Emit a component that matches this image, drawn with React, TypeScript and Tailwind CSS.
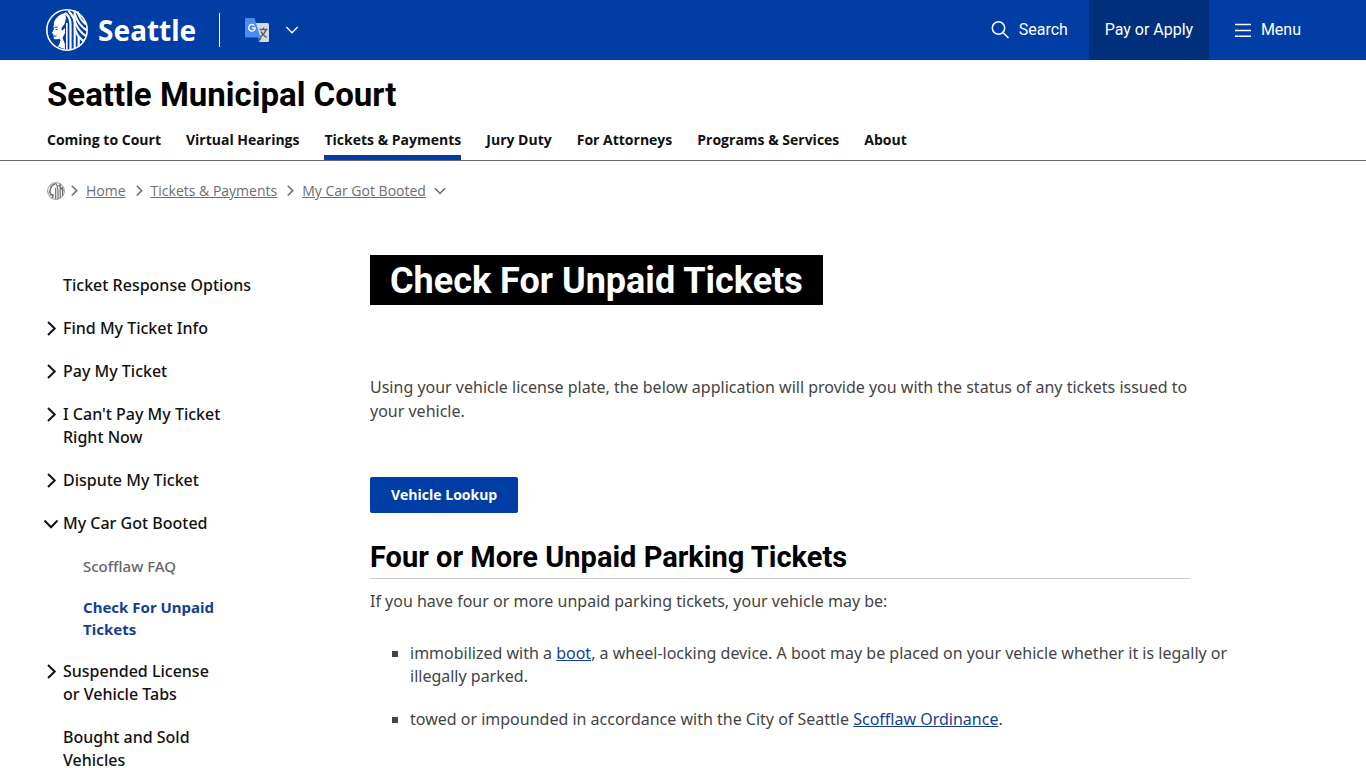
import clsx from "clsx";
import { ReactNode } from "react";

const navItems = [
  { label: "Coming to Court" },
  { label: "Virtual Hearings" },
  { label: "Tickets & Payments", active: true },
  { label: "Jury Duty" },
  { label: "For Attorneys" },
  { label: "Programs & Services" },
  { label: "About" },
];

const crumbs = ["Home", "Tickets & Payments", "My Car Got Booted"];

type SideItem = {
  label: string;
  state?: "closed" | "open";
  children?: { label: string; active?: boolean }[];
};

const sideItems: SideItem[] = [
  { label: "Ticket Response Options" },
  { label: "Find My Ticket Info", state: "closed" },
  { label: "Pay My Ticket", state: "closed" },
  { label: "I Can't Pay My Ticket Right Now", state: "closed" },
  { label: "Dispute My Ticket", state: "closed" },
  {
    label: "My Car Got Booted",
    state: "open",
    children: [
      { label: "Scofflaw FAQ" },
      { label: "Check For Unpaid Tickets", active: true },
    ],
  },
  { label: "Suspended License or Vehicle Tabs", state: "closed" },
  { label: "Bought and Sold Vehicles" },
];

const Chevron = ({
  down,
  className,
  strokeWidth = 2,
}: {
  down?: boolean;
  className?: string;
  strokeWidth?: number;
}) => (
  <svg
    viewBox="0 0 16 16"
    className={clsx("shrink-0", className)}
    fill="none"
    stroke="currentColor"
    strokeWidth={strokeWidth}
    aria-hidden="true"
  >
    <path d={down ? "M1.5 4.5 8 11.2l6.5-6.7" : "M5 1 11.7 7.500 5 14"} />
  </svg>
);

const SealLogo = ({ className }: { className?: string }) => (
  <svg viewBox="0 0 42 42" className={className} aria-hidden="true">
    <circle cx="21" cy="21" r="20.2" fill="none" stroke="currentColor" strokeWidth="1.6" />
    {/* face in profile */}
    <path
      d="M19 4C13 5.500 9.500 9 8 13.500L7.500 18 8 20 5.800 24 7.500 25 7.200 26.500 8 27.300 7.600 29C8 30.600 10 30.500 13.500 29.700L14.500 31C14 34 13 36 12 37.600 14 38.800 17 39.800 19 40L18.800 34.500 16.500 29 19 24V19L15.800 22 15.500 19 18.500 15 20 9Z"
      fill="currentColor"
    />
    <path d="M8.500 18.300 11.500 18M9.500 20.400 11.500 20.600M8 27H10.500" stroke="#003da5" strokeWidth="1" />
    {/* hair */}
    <g fill="none" stroke="currentColor" strokeWidth="2.2">
      <path d="M19 4C21 5 24.500 9 24.500 15V40.500" />
      <path d="M22.500 1.500C24 5 28.700 7 28.700 14V40" />
      <path d="M20.800 14V40.500" strokeWidth="1.6" />
      <path d="M28.700 1.500V12" />
      <path d="M31.500 2.500C33 8 36 12 40 15.500" />
      <path d="M28.700 5C31 12 35 18 41 21.500" />
      <path d="M28.700 12C31 19 35 24 40 27" />
      <path d="M28.700 19C30 25 34 29.500 37.500 32" />
      <path d="M32.700 28V38" />
    </g>
  </svg>
);

/* small seal for the breadcrumb, with fewer and heavier strands */
const SealMark = ({ className }: { className?: string }) => (
  <svg viewBox="0 0 18 18" className={className} fill="none" stroke="currentColor" aria-hidden="true">
    <circle cx="9" cy="9" r="8.400" strokeWidth="1" strokeOpacity="0.7" />
    <path d="M8 2C5 3 3.500 5 3.500 7.500L2.500 10.300 3.500 11V12.800H6C6.200 14.500 5.500 15.500 5 16.200" strokeWidth="1.500" />
    <path d="M8.500 1C10 3 11 5 11 8V17M8.700 6V17M13.200 1.500V16M15.500 5V14M11.500 3 16.500 9" strokeWidth="1.200" />
  </svg>
);

const TranslateIcon = () => (
  <svg viewBox="0 0 24 24" className="h-6 w-6" aria-hidden="true">
    <path d="M10 5H22.500A1.500 1.500 0 0 1 24 6.500V22.500A1.500 1.500 0 0 1 22.500 24H14Z" fill="#d7d9dc" />
    <path d="M12.500 19.500H17L14 24Z" fill="#3a5ba8" />
    <path
      d="M14.500 11.500H22.500M18.500 9.500V11.500M21 11.500C20 15 17.500 17.500 15 19M16 13.500C17 16 19.500 18 21.500 19.500"
      fill="none"
      stroke="#53606b"
      strokeWidth="1.4"
    />
    <path d="M1.500 0H9.500L15.500 19.500H1.500A1.500 1.500 0 0 1 0 18V1.500A1.500 1.500 0 0 1 1.500 0Z" fill="#4a8af4" />
    <path d="M9.300 7.500A3.300 3.300 0 1 0 10.200 10H7.200" fill="none" stroke="#fff" strokeWidth="1.4" />
  </svg>
);

const TopBar = () => (
  <header className="flex h-[60px] items-center bg-[#003da5] pl-[46px] text-white">
    <a href="#" className="flex items-center gap-2.5">
      <SealLogo className="h-[42px] w-[42px]" />
      <span className="text-[28px] font-bold leading-8">Seattle</span>
    </a>
    <span className="ml-[23px] h-[34px] w-px bg-white" />
    <button type="button" aria-label="Translate" className="ml-[25px] flex items-center gap-4">
      <TranslateIcon />
      <Chevron down className="h-3.5 w-3.5" strokeWidth={1.5} />
    </button>
    <div className="ml-auto flex h-full font-['Roboto',sans-serif] text-base">
      <button type="button" className="flex items-center gap-2.5 px-[21px]">
        <svg
          viewBox="0 0 18 18"
          className="h-[18px] w-[18px]"
          fill="none"
          stroke="currentColor"
          strokeWidth="1.5"
          aria-hidden="true"
        >
          <circle cx="7.500" cy="7" r="6.200" />
          <path d="m12 11.500 5.500 5.500" />
        </svg>
        Search
      </button>
      <button type="button" className="w-[120px] bg-[#002f7c]">
        Pay or Apply
      </button>
      <button type="button" className="flex items-center gap-2.5 pl-[26px] pr-[65px]">
        <svg
          viewBox="0 0 16 14"
          className="h-3.5 w-4"
          stroke="currentColor"
          strokeWidth="1.5"
          aria-hidden="true"
        >
          <path d="M0 1.500h16M0 7.500h16M0 13.200h16" />
        </svg>
        Menu
      </button>
    </div>
  </header>
);

const DepartmentHeader = () => (
  <div className="border-b border-[#6b6b6b] px-[47px] pt-[17px]">
    <p className="font-['Roboto',sans-serif] text-[33px] font-bold leading-9 text-black">
      Seattle Municipal Court
    </p>
    <nav className="mt-4 flex gap-[25px] font-['Open_Sans',sans-serif]">
      {navItems.map(({ label, active }) => (
        <a
          key={label}
          href="#"
          className={clsx(
            "border-b-[5px] pb-1 text-sm font-bold leading-[22px] text-[#111]",
            active ? "border-[#003da5]" : "border-transparent"
          )}
        >
          {label}
        </a>
      ))}
    </nav>
  </div>
);

const Breadcrumbs = () => (
  <nav
    aria-label="Breadcrumb"
    className="flex items-center px-[47px] pt-5 font-['Open_Sans',sans-serif] text-sm leading-5 text-[#6e6e6e]"
  >
    <a href="#" aria-label="Seattle.gov">
      <SealMark className="h-[18px] w-[18px]" />
    </a>
    {crumbs.map((crumb, index) => (
      <span key={crumb} className="flex items-center">
        <Chevron className={clsx("mr-1.5 h-3 w-3", index === 0 ? "ml-[3px]" : "ml-[7px]")} />
        <a href="#" className="underline">
          {crumb}
        </a>
      </span>
    ))}
    <Chevron down className="ml-2 h-3 w-3" />
  </nav>
);

const SideNav = () => (
  <nav className="w-[326px] shrink-0 pl-[43px] pt-[19px]">
    <ul className="flex flex-col gap-5 text-base font-medium leading-[23px] text-[#111]">
      {sideItems.map(({ label, state, children }) => (
        <li key={label}>
          <div className={clsx("flex", state ? "w-[182px]" : "w-[212px]")}>
            <span className="flex h-[23px] w-5 shrink-0 items-center">
              {state && <Chevron down={state === "open"} className="h-4 w-4" />}
            </span>
            <a href="#">{label}</a>
          </div>
          {children && (
            <ul className="mt-5 flex w-[190px] flex-col gap-[19px] pl-10 text-[15px] leading-[22px]">
              {children.map((child) => (
                <li key={child.label}>
                  <a
                    href="#"
                    className={child.active ? "font-bold text-[#143f92]" : "text-[#666]"}
                  >
                    {child.label}
                  </a>
                </li>
              ))}
            </ul>
          )}
        </li>
      ))}
    </ul>
  </nav>
);

const TextLink = ({ children }: { children: ReactNode }) => (
  <a href="#" className="text-[#143f92] underline">
    {children}
  </a>
);

const App = () => {
  return (
    <div className="min-h-screen bg-white font-['Noto_Sans',sans-serif]">
      <TopBar />
      <DepartmentHeader />
      <Breadcrumbs />
      <div className="flex pt-[54px]">
        <SideNav />
        <main className="flex-1 pl-11 pr-10 text-base leading-6 text-[#444]">
          <h1 className="w-fit bg-black px-5 pt-0.5 font-['Roboto',sans-serif] text-[36px] font-bold leading-[48px] text-white">
            Check For Unpaid Tickets
          </h1>
          <p className="mt-[70px] max-w-[820px]">
            Using your vehicle license plate, the below application will provide you with the status
            of any tickets issued to your vehicle.
          </p>
          <button
            type="button"
            className="mt-[54px] block h-9 rounded-xs bg-[#003da5] px-[21px] font-['Open_Sans',sans-serif] text-sm font-bold text-white"
          >
            Vehicle Lookup
          </button>
          <h2 className="mt-[26px] max-w-[820px] border-b border-[#ccc] pb-0.5 font-['Roboto',sans-serif] text-[29px] font-bold leading-[37px] text-black">
            Four or More Unpaid Parking Tickets
          </h2>
          <p className="mt-2.5">If you have four or more unpaid parking tickets, your vehicle may be:</p>
          <ul className="mt-[29px] flex max-w-[860px] list-[square] flex-col gap-5 pl-10 leading-[23px]">
            <li>
              immobilized with a <TextLink>boot</TextLink>, a wheel-locking device. A boot may be
              placed on your vehicle whether it is legally or illegally parked.
            </li>
            <li>
              towed or impounded in accordance with the City of Seattle{" "}
              <TextLink>Scofflaw Ordinance</TextLink>.
            </li>
          </ul>
        </main>
      </div>
    </div>
  );
};

export default App;
